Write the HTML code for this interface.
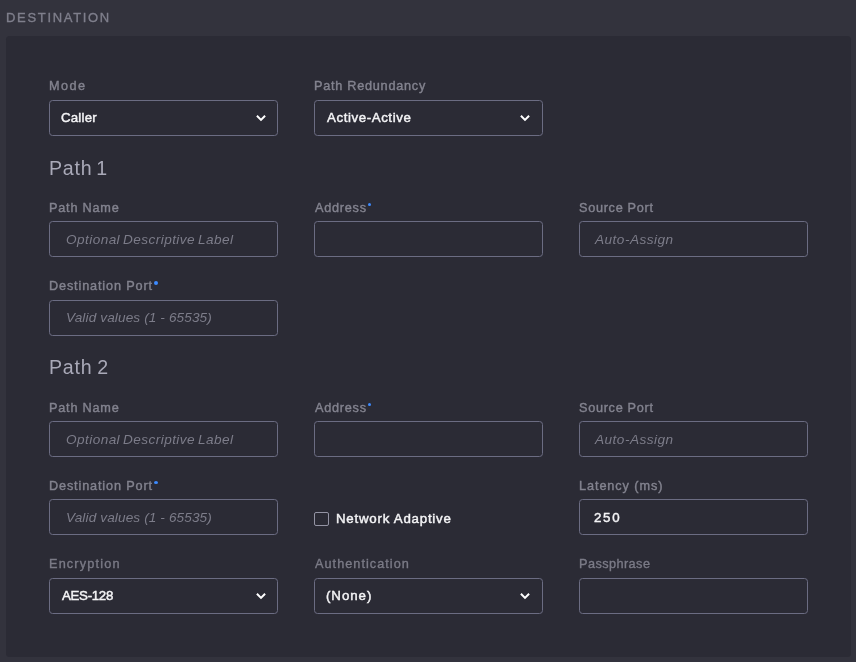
<!DOCTYPE html>
<html lang="en">
<head>
<meta charset="utf-8">
<title>Destination</title>
<style>
  html, body { margin: 0; padding: 0; }
  body {
    width: 856px; height: 662px; overflow: hidden; position: relative;
    background: #33333d;
    font-family: "Liberation Sans", sans-serif;
  }
  .abs { position: absolute; white-space: nowrap; will-change: transform; }
  .title { font-size: 13px; line-height: 16px; color: #7f7f8c; -webkit-text-stroke: 0.35px #7f7f8c; }
  .panel { position: absolute; left: 6px; top: 36px; width: 845px; height: 621px; background: #2b2b35; border-radius: 3.5px; }
  .lbl { font-size: 12.7px; line-height: 16px; color: #83838f; -webkit-text-stroke: 0.4px #83838f; }
  .lbl.dim { color: #7b7b87; -webkit-text-stroke: 0.35px #7b7b87; }
  .h { font-size: 19.6px; line-height: 24px; color: #a9a9b8; letter-spacing: 0.8px; word-spacing: -1.5px; }
  .box { position: absolute; box-sizing: border-box; width: 229px; height: 36px; border: 1px solid #6b6c82; border-radius: 3.5px; background: #2b2b35; }
  .val { font-size: 13.3px; line-height: 18px; color: #f4f4f6; -webkit-text-stroke: 0.45px #f4f4f6; }
  .ph { font-size: 13.6px; line-height: 18px; color: #7c7c89; font-style: italic; word-spacing: -1.2px; }
  .dot { position: absolute; width: 3.6px; height: 3.6px; border-radius: 50%; background: #3d8bff; }
  .chev { position: absolute; width: 10px; height: 7px; overflow: visible; }
  .chev path { fill: none; stroke: #ffffff; stroke-width: 2; stroke-linecap: butt; stroke-linejoin: miter; }
  .cb { position: absolute; box-sizing: border-box; left: 314px; top: 512px; width: 15px; height: 14px; border: 1px solid #9494a4; border-radius: 2px; background: #2b2b35; }
</style>
</head>
<body>
  <div class="abs title" style="left:6px;top:10px;letter-spacing:1.68px">DESTINATION</div>
  <div class="panel"></div>

  <!-- Row 1 -->
  <div class="abs lbl" style="left:49px;top:78px;letter-spacing:1.41px">Mode</div>
  <div class="box" style="left:49px;top:100px"></div>
  <div class="abs val" style="left:61px;top:109px;letter-spacing:0.18px">Caller</div>
  <svg class="chev" style="left:256px;top:115px" viewBox="0 0 10 7"><path d="M0.9 0.8 L5 4.9 L9.1 0.8"/></svg>

  <div class="abs lbl" style="left:314px;top:78px;letter-spacing:0.74px">Path Redundancy</div>
  <div class="box" style="left:314px;top:100px"></div>
  <div class="abs val" style="left:327px;top:109px;letter-spacing:0.58px">Active-Active</div>
  <svg class="chev" style="left:520px;top:115px" viewBox="0 0 10 7"><path d="M0.9 0.8 L5 4.9 L9.1 0.8"/></svg>

  <!-- Path 1 -->
  <div class="abs h" style="left:49px;top:156px;word-spacing:-2.5px">Path 1</div>

  <div class="abs lbl" style="left:49px;top:200px;letter-spacing:0.78px">Path Name</div>
  <div class="box" style="left:49px;top:221px"></div>
  <div class="abs ph" style="left:66px;top:231px;letter-spacing:0.43px">Optional Descriptive Label</div>

  <div class="abs lbl" style="left:315px;top:200px;letter-spacing:0.74px">Address</div>
  <div class="dot" style="left:367.7px;top:202.8px"></div>
  <div class="box" style="left:314px;top:221px"></div>

  <div class="abs lbl" style="left:579px;top:200px;letter-spacing:0.7px">Source Port</div>
  <div class="box" style="left:579px;top:221px"></div>
  <div class="abs ph" style="left:595px;top:231px;letter-spacing:0.48px">Auto-Assign</div>

  <div class="abs lbl" style="left:49px;top:278px;letter-spacing:0.85px">Destination Port</div>
  <div class="dot" style="left:153.9px;top:281px;width:4.3px;height:4.2px"></div>
  <div class="box" style="left:49px;top:300px"></div>
  <div class="abs ph" style="left:66px;top:309px;letter-spacing:0.12px;word-spacing:0">Valid values (1 - 65535)</div>

  <!-- Path 2 -->
  <div class="abs h" style="left:49px;top:355px">Path 2</div>

  <div class="abs lbl" style="left:49px;top:400px;letter-spacing:0.78px">Path Name</div>
  <div class="box" style="left:49px;top:421px"></div>
  <div class="abs ph" style="left:66px;top:431px;letter-spacing:0.43px">Optional Descriptive Label</div>

  <div class="abs lbl" style="left:315px;top:400px;letter-spacing:0.74px">Address</div>
  <div class="dot" style="left:367.7px;top:402.8px"></div>
  <div class="box" style="left:314px;top:421px"></div>

  <div class="abs lbl" style="left:579px;top:400px;letter-spacing:0.7px">Source Port</div>
  <div class="box" style="left:579px;top:421px"></div>
  <div class="abs ph" style="left:595px;top:431px;letter-spacing:0.48px">Auto-Assign</div>

  <div class="abs lbl" style="left:49px;top:478px;letter-spacing:0.85px">Destination Port</div>
  <div class="dot" style="left:153.9px;top:480.9px;width:4.4px;height:3.3px"></div>
  <div class="box" style="left:49px;top:499px"></div>
  <div class="abs ph" style="left:66px;top:509px;letter-spacing:0.12px;word-spacing:0">Valid values (1 - 65535)</div>

  <div class="cb"></div>
  <div class="abs val" style="left:336px;top:510px;letter-spacing:0.76px">Network Adaptive</div>

  <div class="abs lbl" style="left:579px;top:478px;letter-spacing:0.92px">Latency (ms)</div>
  <div class="box" style="left:579px;top:499px"></div>
  <div class="abs val" style="left:594px;top:509px;letter-spacing:1.69px">250</div>

  <!-- Bottom row -->
  <div class="abs lbl dim" style="left:49px;top:556px;letter-spacing:1.17px">Encryption</div>
  <div class="box" style="left:49px;top:578px"></div>
  <div class="abs val" style="left:62px;top:587px;letter-spacing:-0.32px">AES-128</div>
  <svg class="chev" style="left:256px;top:593px" viewBox="0 0 10 7"><path d="M0.9 0.8 L5 4.9 L9.1 0.8"/></svg>

  <div class="abs lbl dim" style="left:315px;top:556px;letter-spacing:1.03px">Authentication</div>
  <div class="box" style="left:314px;top:578px"></div>
  <div class="abs val" style="left:326px;top:587px;letter-spacing:0.94px">(None)</div>
  <svg class="chev" style="left:520px;top:593px" viewBox="0 0 10 7"><path d="M0.9 0.8 L5 4.9 L9.1 0.8"/></svg>

  <div class="abs lbl dim" style="left:579px;top:556px;letter-spacing:0.44px">Passphrase</div>
  <div class="box" style="left:579px;top:578px"></div>
</body>
</html>
